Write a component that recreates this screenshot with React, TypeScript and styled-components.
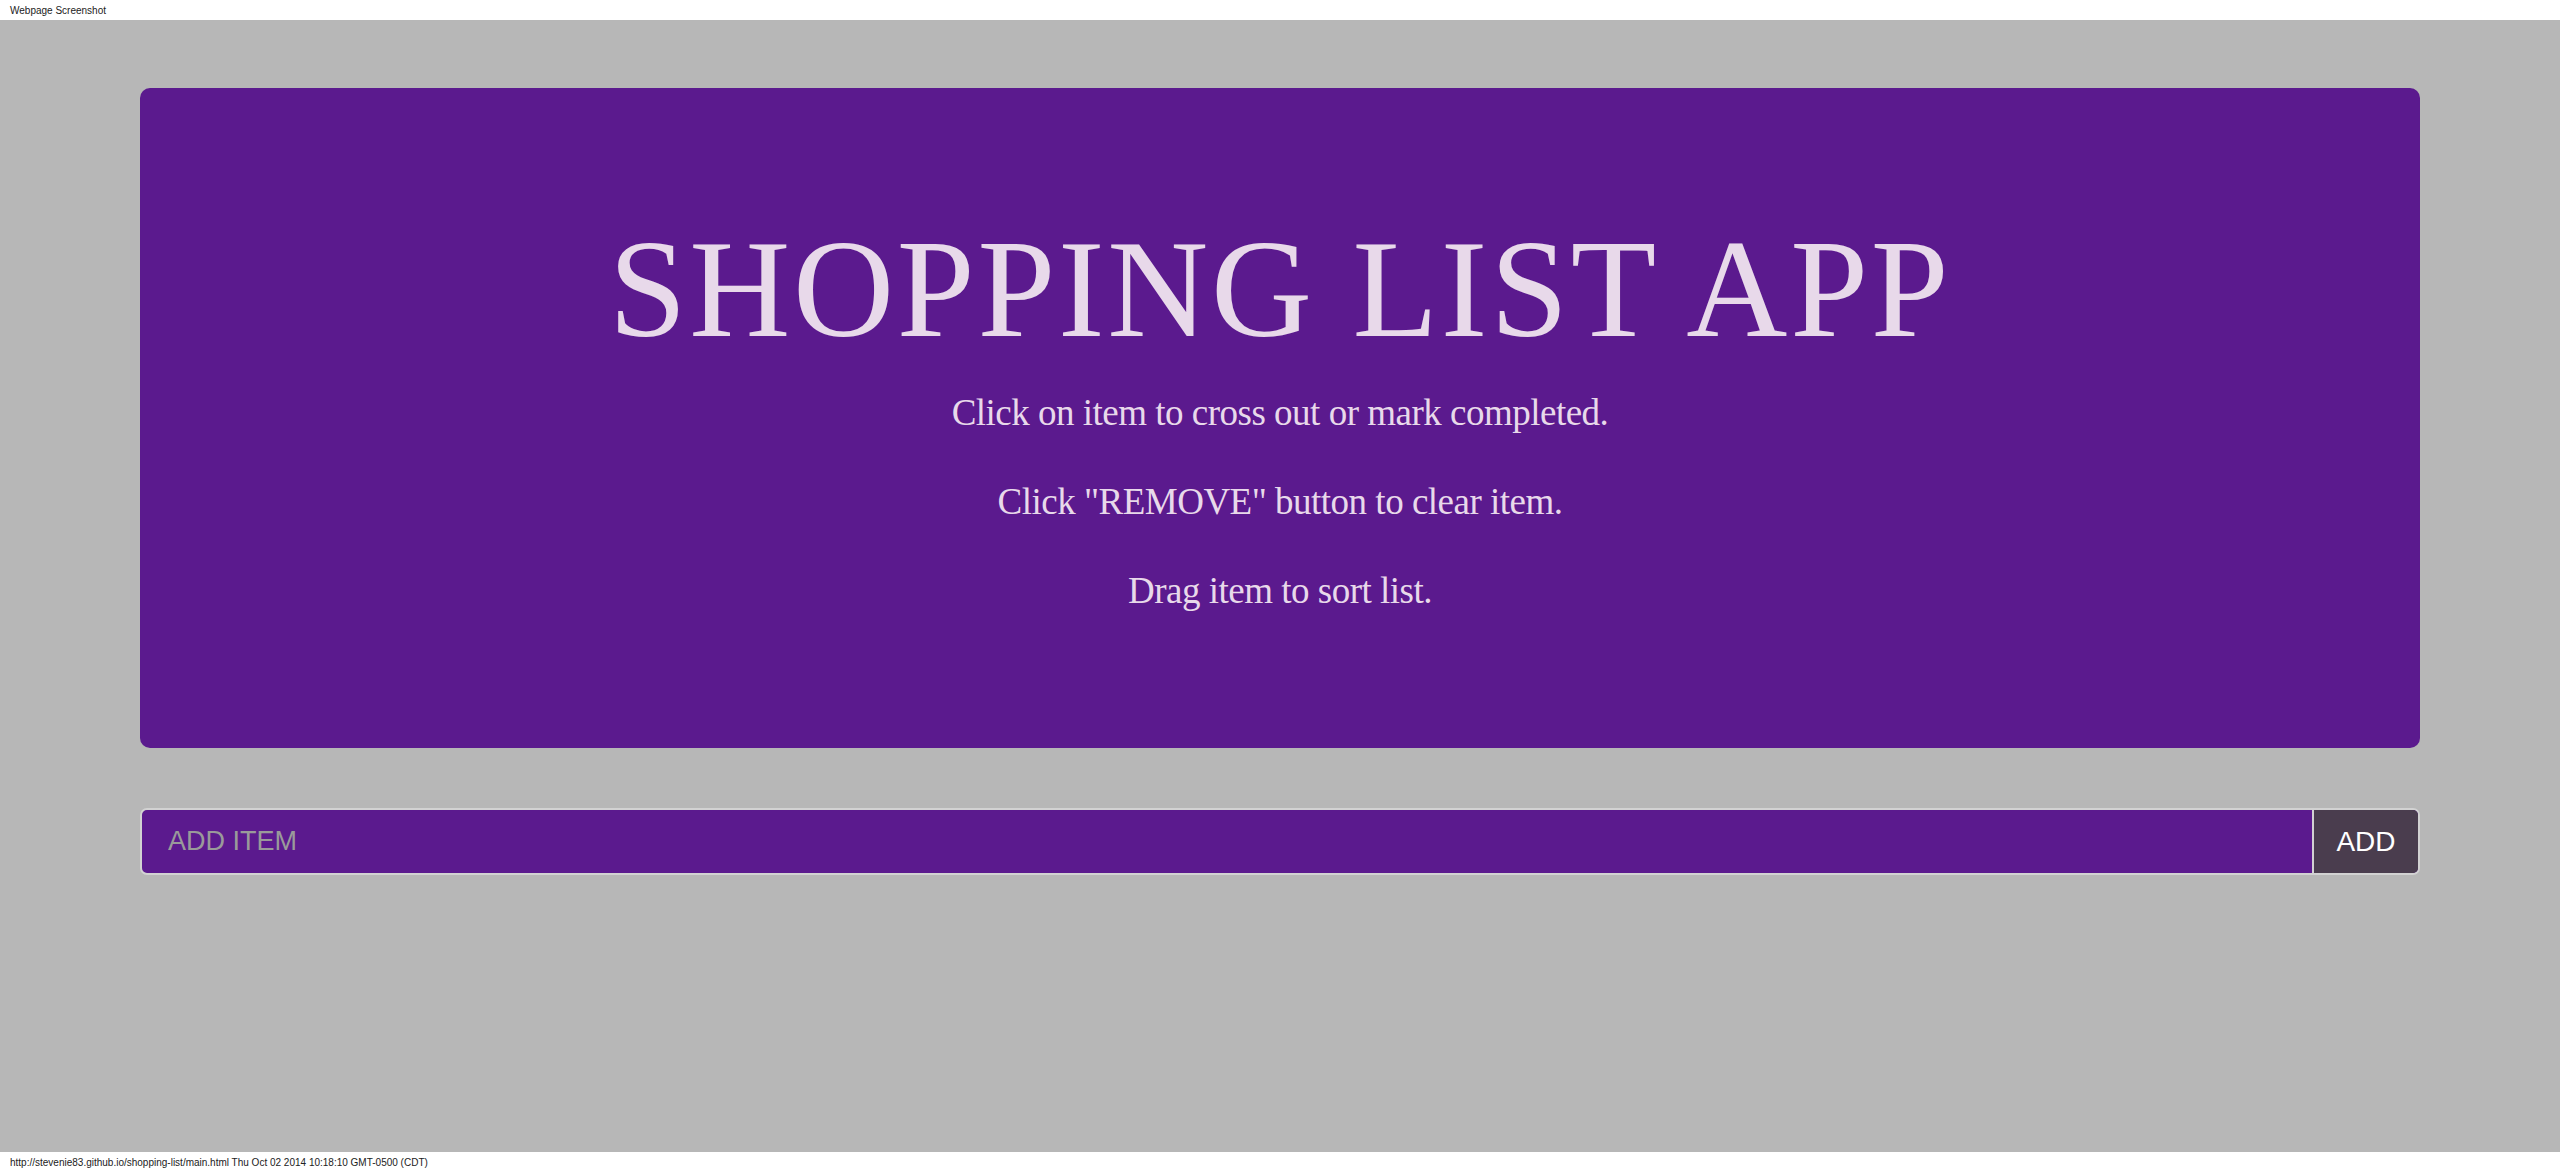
import styled, { createGlobalStyle } from 'styled-components';

const GlobalStyle = createGlobalStyle`
	html, body {
		margin: 0;
		padding: 0;
		background: #b7b7b7;
	}
	* {
		box-sizing: border-box;
	}
`;

const Page = styled.div`
	display: flex;
	flex-direction: column;
	width: 2560px;
	height: 1172px;
	overflow: hidden;
`;

const Strip = styled.div`
	height: 20px;
	flex: none;
	background: #ffffff;
	color: #222;
	font-family: 'Liberation Sans', Arial, sans-serif;
	font-size: 10px;
	padding: 0 10px;
	display: flex;
	align-items: center;
`;

const Main = styled.main`
	flex: 1;
	background: #b7b7b7;
	padding: 68px 140px 0;
	display: flex;
	flex-direction: column;
	gap: 60px;
`;

const Hero = styled.section`
	height: 660px;
	background: #5b1a8e;
	border-radius: 10px;
	padding-top: 131px;
	display: flex;
	flex-direction: column;
	align-items: center;
	color: #e8d9ea;
	font-family: 'Liberation Serif', 'Times New Roman', serif;
`;

const Title = styled.h1`
	margin: 0 0 9px;
	font-size: 140px;
	line-height: 140px;
	font-weight: 400;
	letter-spacing: 2.7px;
`;

const Hint = styled.p`
	margin: 0;
	font-size: 37px;
	line-height: 89px;
	letter-spacing: -0.5px;
`;

const AddForm = styled.form`
	display: flex;
	height: 67px;
	border: 2px solid #d2d2d2;
	border-radius: 7px;
	overflow: hidden;
	background: #5b1a8e;
`;

const ItemInput = styled.input`
	flex: 1;
	border: none;
	outline: none;
	background: transparent;
	padding: 0 0 0 26px;
	font-family: 'Liberation Sans', Arial, sans-serif;
	font-size: 27px;
	color: #ffffff;
	caret-color: #ffffff;
	&::placeholder {
		color: #9a9a9a;
	}
`;

const AddButton = styled.button`
	width: 106px;
	flex: none;
	border: none;
	border-left: 2px solid #d2d2d2;
	background: #4a3d4e;
	color: #ffffff;
	font-family: 'Liberation Sans', Arial, sans-serif;
	font-size: 28px;
	padding: 0;
	cursor: pointer;
`;

export default function App() {
	return (
		<>
			<GlobalStyle />
			<Page>
				<Strip>Webpage Screenshot</Strip>
				<Main>
					<Hero>
						<Title>SHOPPING LIST APP</Title>
						<Hint>Click on item to cross out or mark completed.</Hint>
						<Hint>Click "REMOVE" button to clear item.</Hint>
						<Hint>Drag item to sort list.</Hint>
					</Hero>
					<AddForm onSubmit={(e) => e.preventDefault()}>
						<ItemInput placeholder='ADD ITEM' autoFocus />
						<AddButton type='submit'>ADD</AddButton>
					</AddForm>
				</Main>
				<Strip>
					http://stevenie83.github.io/shopping-list/main.html Thu Oct 02 2014
					10:18:10 GMT-0500 (CDT)
				</Strip>
			</Page>
		</>
	);
}
